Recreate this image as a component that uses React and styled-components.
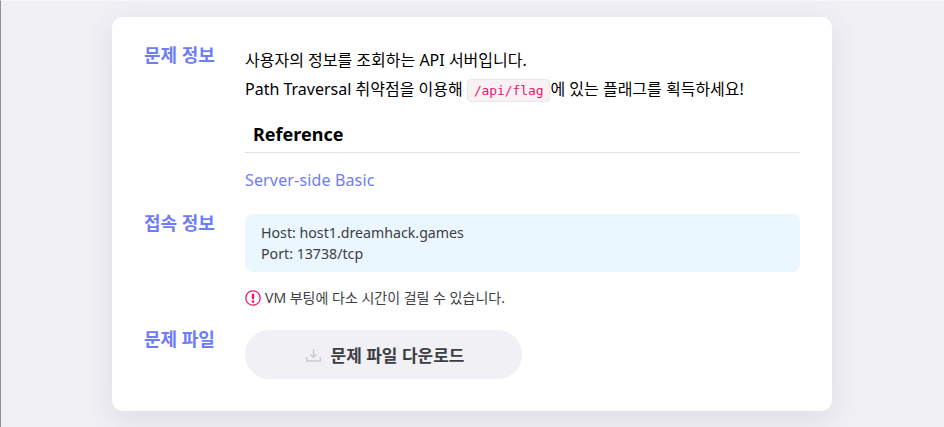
import React from 'react'
import styled, { createGlobalStyle } from 'styled-components'

const GlobalStyle = createGlobalStyle`
  html, body {
    margin: 0;
    padding: 0;
    height: 100%;
    overflow: hidden;
    background: #f0f0f5;
  }
  body {
    font-family: "Noto Sans", "Noto Sans CJK KR", sans-serif;
    color: #000;
  }
`

const Page = styled.div`
  width: 944px;
  height: 427px;
  box-sizing: border-box;
  padding-top: 17px;
  border-left: 1px solid #8f8f8f;
  border-top: 1px solid #f7f7f7;
  display: flex;
  justify-content: center;
  padding-right: 1px;
`

const Card = styled.div`
  width: 720px;
  height: 394px;
  margin-top: -1px;
  box-sizing: border-box;
  padding: 29px 32px 0;
  background: #fff;
  border-radius: 10px;
  box-shadow: 0 8px 30px rgba(70, 70, 100, 0.12);
  display: flex;
  flex-direction: column;
`

const Row = styled.div`
  display: flex;
  margin-top: ${p => p.$top || 0}px;
`

const Label = styled.div`
  width: 101px;
  flex: none;
  margin-top: -3px;
  font-size: 18px;
  line-height: 24px;
  font-weight: 700;
  color: #6e7df5;
`

const Body = styled.div`
  flex: 1;
  min-width: 0;
`

const Text = styled.p`
  margin: 0;
  font-size: 16px;
  line-height: 29px;
`

const Code = styled.code`
  display: inline-block;
  font-family: "DejaVu Sans Mono", monospace;
  font-size: 13px;
  line-height: 21px;
  height: 23px;
  box-sizing: border-box;
  padding: 0 6px;
  color: #e6196e;
  background: #f8f2f5;
  border: 1px solid #e6e6ee;
  border-radius: 4px;
  vertical-align: middle;
  letter-spacing: -0.1px;
`

const Heading = styled.h3`
  margin: 14px 0 0;
  padding: 0 0 1px 8px;
  font-size: 18px;
  line-height: 33px;
  font-weight: 700;
  border-bottom: 1px solid #e1e1e8;
`

const RefLink = styled.a`
  display: block;
  margin-top: 14px;
  font-size: 16px;
  line-height: 27px;
  letter-spacing: 0.15px;
  color: #6e7df5;
  text-decoration: none;
`

const InfoBox = styled.div`
  height: 58px;
  box-sizing: border-box;
  padding: 8px 16px;
  background: #eaf7ff;
  border-radius: 8px;
  font-size: 14.2px;
  line-height: 21px;
  color: #3d3d44;
`

const Notice = styled.div`
  display: flex;
  align-items: center;
  gap: 4px;
  margin-top: 16px;
  font-size: 14px;
  line-height: 20px;
  color: #3d3d44;
`

const DownloadButton = styled.button`
  width: 277px;
  height: 49px;
  padding: 0 0 0 3px;
  border: 0;
  border-radius: 25px;
  background: #f0f0f5;
  display: flex;
  align-items: center;
  justify-content: center;
  gap: 10px;
  font-family: inherit;
  font-size: 17px;
  font-weight: 700;
  color: #3d3d44;
`

const AlertIcon = () => (
  <svg width="16" height="16" viewBox="0 0 16 16" fill="none">
    <circle cx="8" cy="8" r="7.2" stroke="#e6196e" strokeWidth="1.3" />
    <rect x="6.8" y="3.4" width="2.4" height="6" rx="1.1" fill="#e6196e" />
    <circle cx="8" cy="11.6" r="1.3" fill="#e6196e" />
  </svg>
)

const DownloadIcon = () => (
  <svg width="15" height="14" viewBox="0 0 15 14" fill="none" stroke="#c9c9cf" strokeWidth="1.3">
    <path d="M7.5 1v8.5M4.2 6.2l3.3 3.3 3.3-3.3" />
    <path d="M.7 9v4h13.6V9" />
  </svg>
)

export default function App() {
  return (
    <>
      <GlobalStyle />
      <Page>
        <Card>
          <Row>
            <Label>문제 정보</Label>
            <Body>
              <Text>사용자의 정보를 조회하는 API 서버입니다.</Text>
              <Text>
                Path Traversal 취약점을 이용해 <Code>/api/flag</Code>에 있는 플래그를 획득하세요!
              </Text>
              <Heading>Reference</Heading>
              <RefLink href="#">Server-side Basic</RefLink>
            </Body>
          </Row>
          <Row $top={20}>
            <Label>접속 정보</Label>
            <Body>
              <InfoBox>
                Host: host1.dreamhack.games
                <br />
                Port: 13738/tcp
              </InfoBox>
              <Notice>
                <AlertIcon />
                VM 부팅에 다소 시간이 걸릴 수 있습니다.
              </Notice>
            </Body>
          </Row>
          <Row $top={22}>
            <Label>문제 파일</Label>
            <Body>
              <DownloadButton>
                <DownloadIcon />
                문제 파일 다운로드
              </DownloadButton>
            </Body>
          </Row>
        </Card>
      </Page>
    </>
  )
}
